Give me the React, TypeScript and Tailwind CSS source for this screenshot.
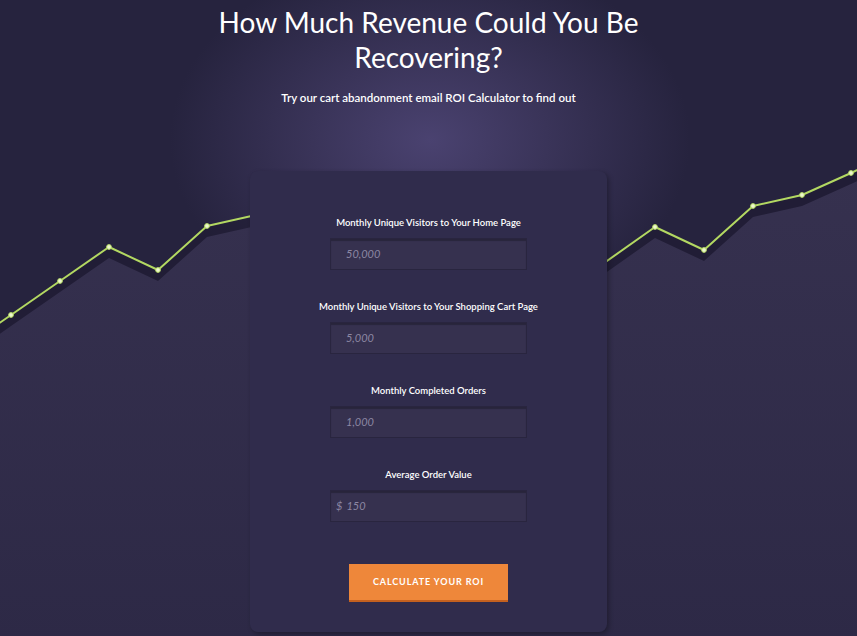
import React from "react";

const fields = [
  { label: "Monthly Unique Visitors to Your Home Page", value: "50,000" },
  { label: "Monthly Unique Visitors to Your Shopping Cart Page", value: "5,000" },
  { label: "Monthly Completed Orders", value: "1,000" },
  { label: "Average Order Value", value: "150", prefix: "$" },
];

const pts: [number, number][] = [
  [-38, 349],
  [11, 315],
  [60, 281],
  [109, 247],
  [158, 270],
  [207, 226],
  [256, 215],
  [420, 260],
  [580, 280],
  [655, 227],
  [704, 250],
  [753, 206],
  [802, 195],
  [851, 173],
  [900, 150],
];

const dots = pts.filter(([x]) => (x > 0 && x < 250) || (x > 607 && x < 857));

const shift = (dy: number) => pts.map(([x, y]) => `${x},${y + dy}`).join(" ");

const Chart = () => (
  <svg className="absolute inset-0" width="857" height="636" viewBox="0 0 857 636">
    <defs>
      <linearGradient id="area" x1="0" y1="0" x2="0" y2="1">
        <stop offset="0" stopColor="#36314f" />
        <stop offset="1" stopColor="#2c2845" />
      </linearGradient>
    </defs>
    <polyline points={shift(6)} fill="none" stroke="#1d1a30" strokeOpacity="0.55" strokeWidth="11" strokeLinejoin="round" />
    <polygon points={`${shift(11)} 900,700 -38,700`} fill="url(#area)" />
    <polyline points={shift(0)} fill="none" stroke="#b3d862" strokeWidth="2" strokeLinejoin="round" />
    {dots.map(([x, y]) => (
      <circle key={x} cx={x} cy={y} r="2.4" fill="#eef8cf" stroke="#b3d862" strokeWidth="1" />
    ))}
  </svg>
);

export default function App() {
  return (
    <div
      className="relative w-full h-[636px] overflow-hidden bg-[#26233e] bg-[radial-gradient(ellipse_260px_190px_at_430px_140px,#4a4270_0%,#3a3459_45%,#26233e_100%)]"
      style={{ fontFamily: "Lato, 'Open Sans', sans-serif" }}
    >
      <Chart />
      <div className="relative flex flex-col items-center">
        <h1 className="pt-[5px] text-center text-[28px] leading-[35px] font-normal text-white w-[460px]">
          How Much Revenue Could You Be Recovering?
        </h1>
        <p className="mt-[15px] text-[11.5px] leading-4 font-semibold text-white">
          Try our cart abandonment email ROI Calculator to find out
        </p>

        <div className="mt-[65px] w-[357px] h-[461px] rounded-lg bg-[#302c4c] shadow-[2px_2px_5px_rgba(0,0,0,0.3)] flex flex-col items-center pt-[44px]">
          {fields.map((f, i) => (
            <div key={f.label} className={`flex flex-col items-center ${i > 0 ? "mt-[29px]" : ""}`}>
              <label className="text-[9.5px] leading-4 font-semibold text-white">{f.label}</label>
              <div className="mt-[7px] w-[197px] h-[32px] flex items-center bg-[#36314f] border border-[#29253f] shadow-[inset_0_2px_1px_rgba(0,0,0,0.25)] text-[11px] italic text-[#8c87a3]">
                {f.prefix ? (
                  <span className="pl-[5px] pr-[4px]">{f.prefix}</span>
                ) : (
                  <span className="pl-[15px]" />
                )}
                <span>{f.value}</span>
              </div>
            </div>
          ))}

          <button className="mt-[42px] w-[159px] h-[38px] bg-[#ee873a] border-b-2 border-[#c4611f] text-white text-[9px] font-bold tracking-[0.1em]">
            CALCULATE YOUR ROI
          </button>
        </div>
      </div>
    </div>
  );
}
